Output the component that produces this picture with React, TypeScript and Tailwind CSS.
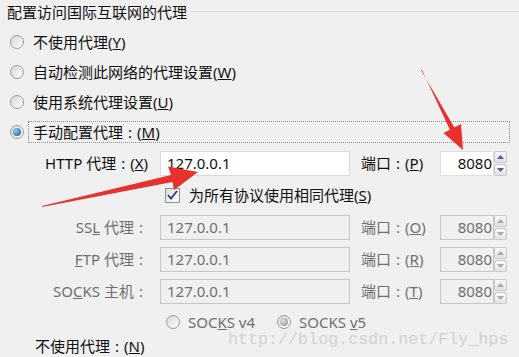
import React from "react";

type RadioProps = { checked?: boolean; disabled?: boolean };

const Radio = ({ checked, disabled }: RadioProps) => (
  <span className="flex h-[14px] w-[14px] shrink-0 items-center justify-center rounded-full border border-[#9c9c9c] bg-linear-to-br from-[#d6d6d6] to-[#ffffff]">
    {checked && (
      <span
        className={
          disabled
            ? "h-[8px] w-[8px] rounded-full bg-radial-[at_35%_35%] from-[#e0e0e0] to-[#8a8a8a]"
            : "h-[8px] w-[8px] rounded-full bg-radial-[at_35%_35%] from-[#8fd3ff] to-[#0f4f86]"
        }
      />
    )}
  </span>
);

const Key = ({ k }: { k: string }) => (
  <span>
    (<u>{k}</u>)
  </span>
);

const Colon = () => <span className="mx-[5px]">:</span>;

const Spinner = ({ disabled }: { disabled?: boolean }) => (
  <div className="flex h-full w-[13px] flex-col gap-px">
    {["up", "down"].map((d) => (
      <div
        key={d}
        className="flex flex-1 items-center justify-center rounded-[2px] border border-[#c9c9c9] bg-linear-to-b from-[#fafafa] to-[#e2e2e2]"
      >
        <svg width="7" height="4" viewBox="0 0 7 4">
          <path
            d={d === "up" ? "M0 4 L3.5 0 L7 4 Z" : "M0 0 L3.5 4 L7 0 Z"}
            fill={disabled ? "#a9a9a9" : "#4c5f88"}
          />
        </svg>
      </div>
    ))}
  </div>
);

interface FieldProps {
  label: React.ReactNode;
  portKey: string;
  disabled?: boolean;
}

const FieldRow = ({ label, portKey, disabled }: FieldProps) => (
  <div className={`flex h-[32px] items-center ${disabled ? "text-[#6f6f6f]" : "text-[#111111]"}`}>
    <div className="w-[150px] shrink-0 pr-[2px] text-right">{label}</div>
    <div
      className={`ml-[10px] flex h-[25px] w-[190px] items-center border px-[6px] ${
        disabled ? "border-[#c6c6c6] bg-[#f0f0f0]" : "border-[#d9d9d9] bg-white"
      }`}
    >
      127.0.0.1
    </div>
    <div className="ml-[11px] w-[79px] shrink-0">
      端口<Colon />
      <Key k={portKey} />
    </div>
    <div className="flex h-[25px] items-stretch">
      <div
        className={`flex w-[54px] items-center justify-end border pr-[1px] ${
          disabled ? "border-[#c6c6c6] bg-[#f0f0f0]" : "border-[#e0e0e0] bg-white"
        }`}
      >
        8080
      </div>
      <Spinner disabled={disabled} />
    </div>
  </div>
);

const App = () => {
  return (
    <div className="relative h-[357px] w-[519px] overflow-hidden bg-[#f0f0f0] font-['Noto_Sans','Noto_Sans_CJK_SC',sans-serif] text-[15px] leading-none text-[#111111]">
      <div className="flex h-[24px] items-center pl-[7px]">
        <span>配置访问国际互联网的代理</span>
        <div className="ml-[4px] mt-[-2px] h-px flex-1 bg-[#dadada]" />
      </div>

      <div className="mt-[3px] flex flex-col">
        <div className="flex h-[30px] items-center pl-[10px]">
          <Radio />
          <span className="ml-[9px]">
            不使用代理<Key k="Y" />
          </span>
        </div>
        <div className="flex h-[30px] items-center pl-[10px]">
          <Radio />
          <span className="ml-[9px]">
            自动检测此网络的代理设置<Key k="W" />
          </span>
        </div>
        <div className="flex h-[30px] items-center pl-[10px]">
          <Radio />
          <span className="ml-[9px]">
            使用系统代理设置<Key k="U" />
          </span>
        </div>
        <div className="flex h-[30px] items-center pl-[10px]">
          <Radio checked />
          <div className="ml-[4px] flex h-[22px] w-[482px] items-center border border-dotted border-[#8c8c8c] px-[4px]">
            手动配置代理<Colon />
            <Key k="M" />
          </div>
        </div>
      </div>

      <FieldRow
        label={
          <>
            HTTP 代理<Colon />
            <Key k="X" />
          </>
        }
        portKey="P"
      />

      <div className="flex h-[32px] items-center pl-[165px]">
        <span className="flex h-[15px] w-[15px] items-center justify-center border border-[#8e8f8f] bg-linear-to-br from-[#dcdcdc] to-[#ffffff]">
          <svg width="11" height="10" viewBox="0 0 11 10">
            <path d="M1 5 L4 8.5 L10 1" fill="none" stroke="#2c3a6e" strokeWidth="1.8" />
          </svg>
        </span>
        <span className="ml-[9px]">
          为所有协议使用相同代理<Key k="S" />
        </span>
      </div>

      <FieldRow
        disabled
        label={
          <>
            SS<u>L</u> 代理<Colon />
          </>
        }
        portKey="O"
      />
      <FieldRow
        disabled
        label={
          <>
            <u>F</u>TP 代理<Colon />
          </>
        }
        portKey="R"
      />
      <FieldRow
        disabled
        label={
          <>
            SO<u>C</u>KS 主机<Colon />
          </>
        }
        portKey="T"
      />

      <div className="flex h-[30px] items-center pl-[166px] text-[#6f6f6f]">
        <Radio />
        <span className="ml-[8px]">
          SOC<u>K</u>S v4
        </span>
        <span className="ml-[22px]">
          <Radio checked disabled />
        </span>
        <span className="ml-[8px]">
          SOCKS <u>v</u>5
        </span>
      </div>

      <div className="flex h-[18px] items-center pl-[35px]">
        不使用代理<Colon />
        <Key k="N" />
      </div>

      <div className="absolute left-[228px] top-[332px] font-['Liberation_Mono',monospace] text-[16.7px] leading-none text-[#d2d2d2]">
        http://blog.csdn.net/Fly_hps
      </div>

      <svg className="pointer-events-none absolute inset-0" width="519" height="357" viewBox="0 0 519 357">
        <polygon
          points="42,207 172.5,182 174,190 198,172 168,166.5 171,175 42,206"
          fill="#e8302c"
        />
        <polygon
          points="421,70 454.3,127.5 461,124 463,150 443.5,133 449.9,129.7 422,70"
          fill="#e8302c"
        />
      </svg>
    </div>
  );
};

export default App;
